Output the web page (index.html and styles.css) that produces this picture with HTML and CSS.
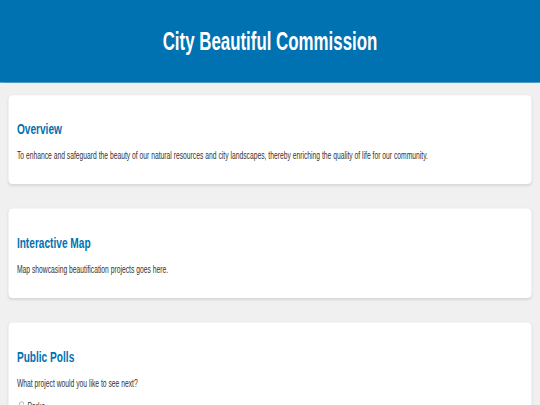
FILE: index.html
```html
<!DOCTYPE html>
<html lang="en">
<head>
<meta charset="utf-8">
<title>City Beautiful Commission</title>
<link rel="stylesheet" href="styles.css">
</head>
<body>
<div class="viewport">
  <div class="page">
    <header class="site-header">
      <h1 class="site-title">City Beautiful Commission</h1>
    </header>
    <main class="content">
      <section class="card">
        <h2 class="card-title">Overview</h2>
        <p class="card-text">To enhance and safeguard the beauty of our natural resources and city landscapes, thereby enriching the quality of life for our community.</p>
      </section>
      <section class="card">
        <h2 class="card-title">Interactive Map</h2>
        <p class="card-text">Map showcasing beautification projects goes here.</p>
      </section>
      <section class="card">
        <h2 class="card-title">Public Polls</h2>
        <p class="card-text">What project would you like to see next?</p>
        <form class="poll">
          <label class="poll-option"><input type="radio" name="project" value="parks"> Parks</label>
          <label class="poll-option"><input type="radio" name="project" value="art"> Public Art</label>
          <label class="poll-option"><input type="radio" name="project" value="trees"> Street Trees</label>
        </form>
      </section>
    </main>
  </div>
</div>
</body>
</html>
```

FILE: styles.css
```css
html, body {
  margin: 0;
  padding: 0;
  background: #f0f0f0;
  overflow: hidden;
}

.viewport {
  width: 540px;
  height: 405px;
  overflow: hidden;
}

.page {
  width: 1280px;
  font-family: "Liberation Sans", Arial, sans-serif;
  font-size: 16px;
  color: #333;
  transform: scale(0.421875, 0.63);
  transform-origin: 0 0;
}

.site-header {
  background: #0072b1;
  color: #fff;
  padding: 16px 0;
  text-align: center;
  box-shadow: 0 1px 2px rgba(0, 114, 177, 0.35);
}

.site-title {
  margin: 26.8px 0;
  font-size: 40px;
  font-weight: bold;
}

.content {
  padding: 20px;
  display: flex;
  flex-direction: column;
  gap: 39px;
}

.card {
  background: #fff;
  border-radius: 8px;
  padding: 20px;
  box-shadow: 0 2px 5px rgba(0, 0, 0, 0.1);
}

.card-title {
  color: #0072b1;
  font-size: 24px;
  margin: 19.92px 0;
}

.card-text {
  margin: 16px 0;
}

.poll-option {
  display: block;
}
```
